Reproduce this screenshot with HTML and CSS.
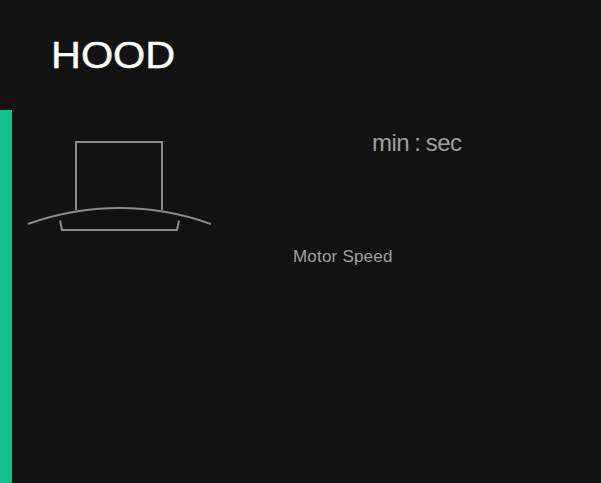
FILE: index.html
```html
<!DOCTYPE html>
<html lang="en">
  <head>
    <meta charset="UTF-8" />
    <title>Hood</title>
    <link rel="stylesheet" href="styles.css">
  </head>
  <body>
    <h1 class="title"><span class="title-text">HOOD</span></h1>
    <div class="panel">
      <div class="hood-col">
        <svg class="hood-icon" width="184" height="92" viewBox="0 0 184 92" fill="none" stroke="#8c8c8c" stroke-width="2">
          <path d="M49 70V2H135V70" />
          <path d="M1 84A270 270 0 0 1 184 84" />
          <path d="M33 80.5L35 90H150L152 80.5" />
        </svg>
      </div>
      <div class="info-col">
        <div class="timer">min : sec</div>
        <div class="motor">Motor Speed</div>
      </div>
    </div>
  </body>
</html>
```
FILE: styles.css
```css
html,
body {
  height: 100%;
}
body {
  margin: 0;
  background-color: #121212;
  font-family: "Liberation Sans", Arial, sans-serif;
  overflow: hidden;
}
.title {
  height: 110px;
  margin: 0;
  padding: 34px 0 0 51px;
  box-sizing: border-box;
  font-size: 36px;
  font-weight: 400;
  line-height: 44px;
  color: #fff;
}
.title-text {
  display: inline-block;
  transform: scaleX(1.15);
  transform-origin: 0 0;
  -webkit-text-stroke: 0.4px #fff;
}
.panel {
  display: flex;
  height: 373px;
  border-left: 12px solid #10bf8c;
}
.hood-col {
  width: 281px;
  padding: 30px 0 0 15px;
  box-sizing: border-box;
}
.hood-icon {
  display: block;
}
.info-col {
  flex: 1;
  padding-top: 18px;
}
.timer {
  margin-left: 79px;
  font-size: 24px;
  line-height: 30px;
  letter-spacing: -0.5px;
  word-spacing: -1px;
  color: #a0a0a0;
}
.motor {
  margin-top: 89px;
  font-size: 17px;
  line-height: 20px;
  letter-spacing: 0.2px;
  color: #a0a0a0;
}
```
